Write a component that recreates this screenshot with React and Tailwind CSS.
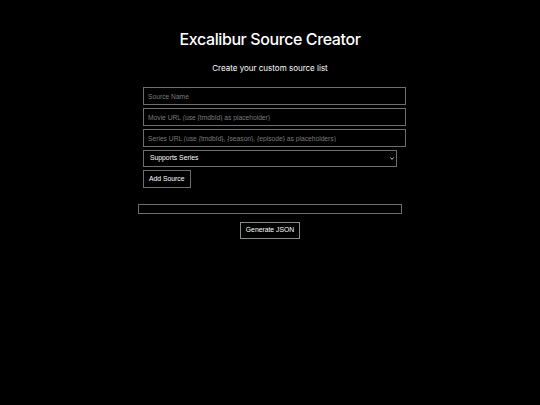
import React from "react";

const field =
  "block h-[18px] w-full bg-black border border-[#6e6e6e] px-[4px] text-[6.7px] text-white placeholder:text-[#7a7a7a] outline-none";

export default function App() {
  return (
    <div className="min-h-screen bg-black text-white flex flex-col items-center pt-[29px] font-['Liberation_Sans',Arial,sans-serif]">
      <h1 className="text-[16px] leading-[20px] font-medium tracking-[-0.4px] font-['Inter',sans-serif]">
        Excalibur Source Creator
      </h1>
      <p className="mt-[14px] text-[8px] leading-[10px] font-['Inter',sans-serif]">
        Create your custom source list
      </p>

      <div className="mt-[14px] ml-[9px] w-[263px] flex flex-col gap-[3px]">
        <input className={field} placeholder="Source Name" />
        <input className={field} placeholder="Movie URL (use {tmdbId} as placeholder)" />
        <input className={field} placeholder="Series URL (use {tmdbId}, {season}, {episode} as placeholders)" />
        <div className="relative w-[254px] h-[17px]">
          <select className="block appearance-none h-[17px] w-full bg-black border border-[#6e6e6e] pl-[6px] text-[6.8px] text-white outline-none">
            <option>Supports Series</option>
          </select>
          <svg className="absolute right-[3px] top-[7px]" width="4" height="3" viewBox="0 0 4 3">
            <path d="M0.3 0.4 L2 2.4 L3.7 0.4" stroke="#dddddd" strokeWidth="0.9" fill="none" />
          </svg>
        </div>
        <div className="h-[18px]">
          <button className="block h-[18px] px-[5px] border border-[#6e6e6e] bg-black text-[6.8px] text-white">
            Add Source
          </button>
        </div>
      </div>

      <div className="mt-[16px] w-[264px] h-[10px] border border-[#6e6e6e]" />

      <button className="mt-[8px] h-[17px] px-[5px] border border-[#8a8a8a] bg-black text-[6.8px] text-white">
        Generate JSON
      </button>
    </div>
  );
}
